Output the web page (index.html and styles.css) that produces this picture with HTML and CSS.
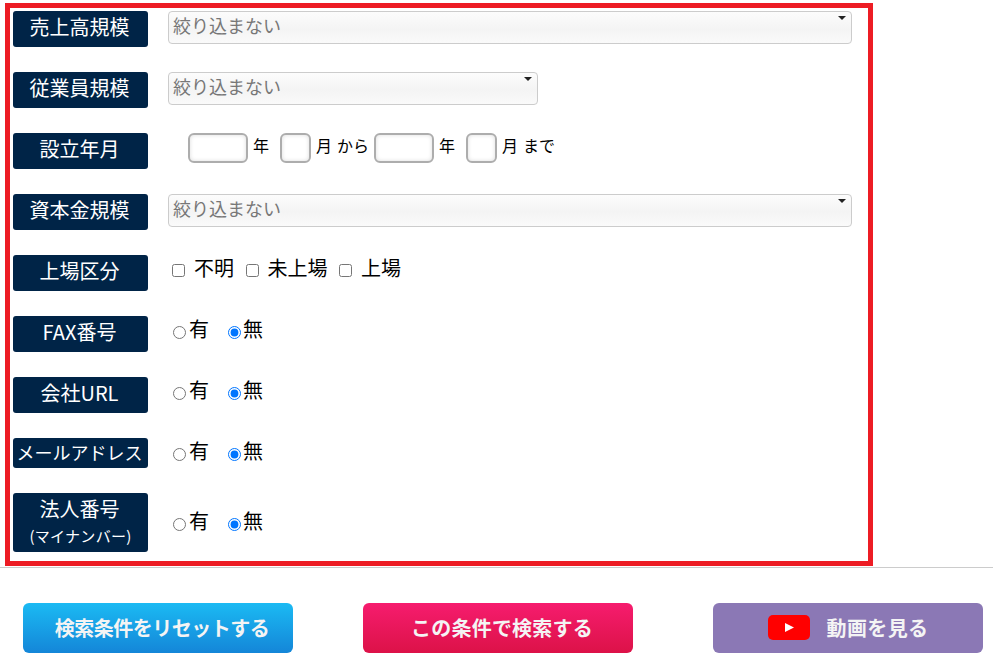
FILE: index.html
```html
<!DOCTYPE html>
<html lang="ja">
  <head>
    <meta charset="UTF-8" />
    <title>検索条件</title>
    <link rel="stylesheet" href="styles.css">
  </head>
  <body>
    <form class="search-box">
      <div class="row">
        <div class="row__label">売上高規模</div>
        <div class="select select--wide">絞り込まない<span class="select__arrow"></span></div>
      </div>
      <div class="row">
        <div class="row__label">従業員規模</div>
        <div class="select select--narrow">絞り込まない<span class="select__arrow"></span></div>
      </div>
      <div class="row">
        <div class="row__label">設立年月</div>
        <div class="dates">
          <input class="date date--year" type="text">
          <span class="date__unit date__unit--year">年</span>
          <input class="date date--month" type="text">
          <span class="date__unit">月</span>
          <span class="date__unit date__unit--word">から</span>
          <input class="date date--year" type="text">
          <span class="date__unit date__unit--year">年</span>
          <input class="date date--month" type="text">
          <span class="date__unit">月</span>
          <span class="date__unit date__unit--word">まで</span>
        </div>
      </div>
      <div class="row">
        <div class="row__label">資本金規模</div>
        <div class="select select--wide">絞り込まない<span class="select__arrow"></span></div>
      </div>
      <div class="row">
        <div class="row__label">上場区分</div>
        <div class="options options--check">
          <label class="check"><input type="checkbox">不明</label>
          <label class="check"><input type="checkbox">未上場</label>
          <label class="check"><input type="checkbox">上場</label>
        </div>
      </div>
      <div class="row">
        <div class="row__label">FAX番号</div>
        <div class="options">
          <label class="radio"><input type="radio" name="fax">有</label>
          <label class="radio"><input type="radio" name="fax" checked>無</label>
        </div>
      </div>
      <div class="row">
        <div class="row__label">会社URL</div>
        <div class="options">
          <label class="radio"><input type="radio" name="url">有</label>
          <label class="radio"><input type="radio" name="url" checked>無</label>
        </div>
      </div>
      <div class="row">
        <div class="row__label row__label--small">メールアドレス</div>
        <div class="options">
          <label class="radio"><input type="radio" name="mail">有</label>
          <label class="radio"><input type="radio" name="mail" checked>無</label>
        </div>
      </div>
      <div class="row row--last">
        <div class="row__label row__label--tall">法人番号<small>(マイナンバー)</small></div>
        <div class="options">
          <label class="radio"><input type="radio" name="corp">有</label>
          <label class="radio"><input type="radio" name="corp" checked>無</label>
        </div>
      </div>
    </form>
    <hr class="divider">
    <div class="actions">
      <button class="btn btn--reset" type="button">検索条件をリセットする</button>
      <button class="btn btn--search" type="button">この条件で検索する</button>
      <button class="btn btn--video" type="button">
        <svg class="btn__icon" width="42" height="25" viewBox="0 0 42 25">
          <rect width="42" height="25" rx="5" fill="#f00" />
          <path d="M17 8l9 4.5-9 4.5z" fill="#fff" />
        </svg>
        動画を見る
      </button>
    </div>
  </body>
</html>
```

FILE: styles.css
```css
* {
  margin: 0;
  padding: 0;
  box-sizing: border-box;
}
body {
  font-family: "Noto Sans CJK JP", "Noto Sans", sans-serif;
  color: #000;
  background: #fff;
  height: 667px;
  overflow: hidden;
}

/* Form box */
.search-box {
  width: 868px;
  margin: 3px 0 0 5px;
  border: 5px solid #ed1c24;
  padding: 3px 3px 9px 3px;
}
.row {
  display: flex;
  align-items: flex-start;
  gap: 20px;
  margin-bottom: 25px;
}
.row--last {
  align-items: center;
  margin-bottom: 0;
}
.row--last .options {
  padding-bottom: 4px;
}
.row__label {
  flex: none;
  width: 135px;
  height: 36px;
  padding-right: 2px;
  background: #002447;
  border-radius: 3px;
  color: #fff;
  font-size: 20px;
  line-height: 32px;
  text-align: center;
}
.row__label--small {
  height: 30px;
  font-size: 18px;
  line-height: 28px;
  white-space: nowrap;
}
.row__label--tall {
  height: 59px;
  line-height: 30px;
  padding-top: 1px;
}
.row__label--tall small {
  display: block;
  margin-right: -2px;
  font-size: 15px;
  letter-spacing: 0.3px;
  line-height: 24px;
}

/* Select */
.select {
  position: relative;
  height: 33px;
  padding-left: 4px;
  border: 1px solid #ccc;
  border-radius: 4px;
  background: linear-gradient(#fcfcfc, #f4f4f4 55%, #fafafa);
  color: #777;
  font-size: 18px;
  line-height: 26px;
}
.select--wide {
  width: 684px;
}
.select--narrow {
  width: 370px;
}
.select__arrow {
  position: absolute;
  top: 4px;
  right: 5px;
  border-left: 4px solid transparent;
  border-right: 4px solid transparent;
  border-top: 4px solid #222;
}

/* Dates */
.dates {
  display: flex;
  align-items: center;
  height: 30px;
  padding-left: 20px;
  font-size: 16px;
}
.date {
  height: 30px;
  border: 2px solid #adadad;
  border-radius: 6px;
  background: #fff;
  box-shadow: inset 0 0 4px #ddd;
}
.date--year {
  width: 60px;
}
.date--month {
  width: 31px;
}
.date__unit {
  align-self: flex-start;
  margin-left: 5px;
  line-height: 24px;
}
.date__unit--year {
  margin-right: 11px;
}
.date__unit--word {
  margin-left: 5px;
  margin-right: 5px;
}

/* Radios and checkboxes */
.options {
  display: flex;
  gap: 19px;
  padding-left: 5px;
  font-size: 20px;
  line-height: 26px;
}
.options--check {
  gap: 12.5px;
}
.radio input {
  margin: 0 3px 0 0;
  vertical-align: -2px;
}
.radio + .radio input {
  margin-right: 2px;
}
.check input {
  margin: 0 9px 0 -1px;
  vertical-align: -1px;
}

.divider {
  width: 993px;
  height: 1px;
  margin-top: 1px;
  border: none;
  background: #ccc;
}

/* Buttons */
.actions {
  display: flex;
  gap: 70px;
  margin: 35px 0 0 23px;
}
.btn {
  display: flex;
  align-items: center;
  justify-content: center;
  gap: 17px;
  width: 270px;
  height: 50px;
  padding-bottom: 1px;
  border: none;
  border-radius: 6px;
  color: #f4f4f4;
  font-family: inherit;
  font-size: 20px;
  font-weight: 700;
  letter-spacing: 0.2px;
  cursor: pointer;
}
.btn--reset {
  padding-left: 8px;
  letter-spacing: -0.5px;
  background: linear-gradient(#1bbaf3, #1486d8);
}
.btn--search {
  padding-left: 8px;
  background: linear-gradient(#f61c6e, #dc1248);
}
.btn--video {
  margin-left: 10px;
  letter-spacing: 0.4px;
  background: #8b78b5;
}
.btn__icon {
  flex: none;
}
```
